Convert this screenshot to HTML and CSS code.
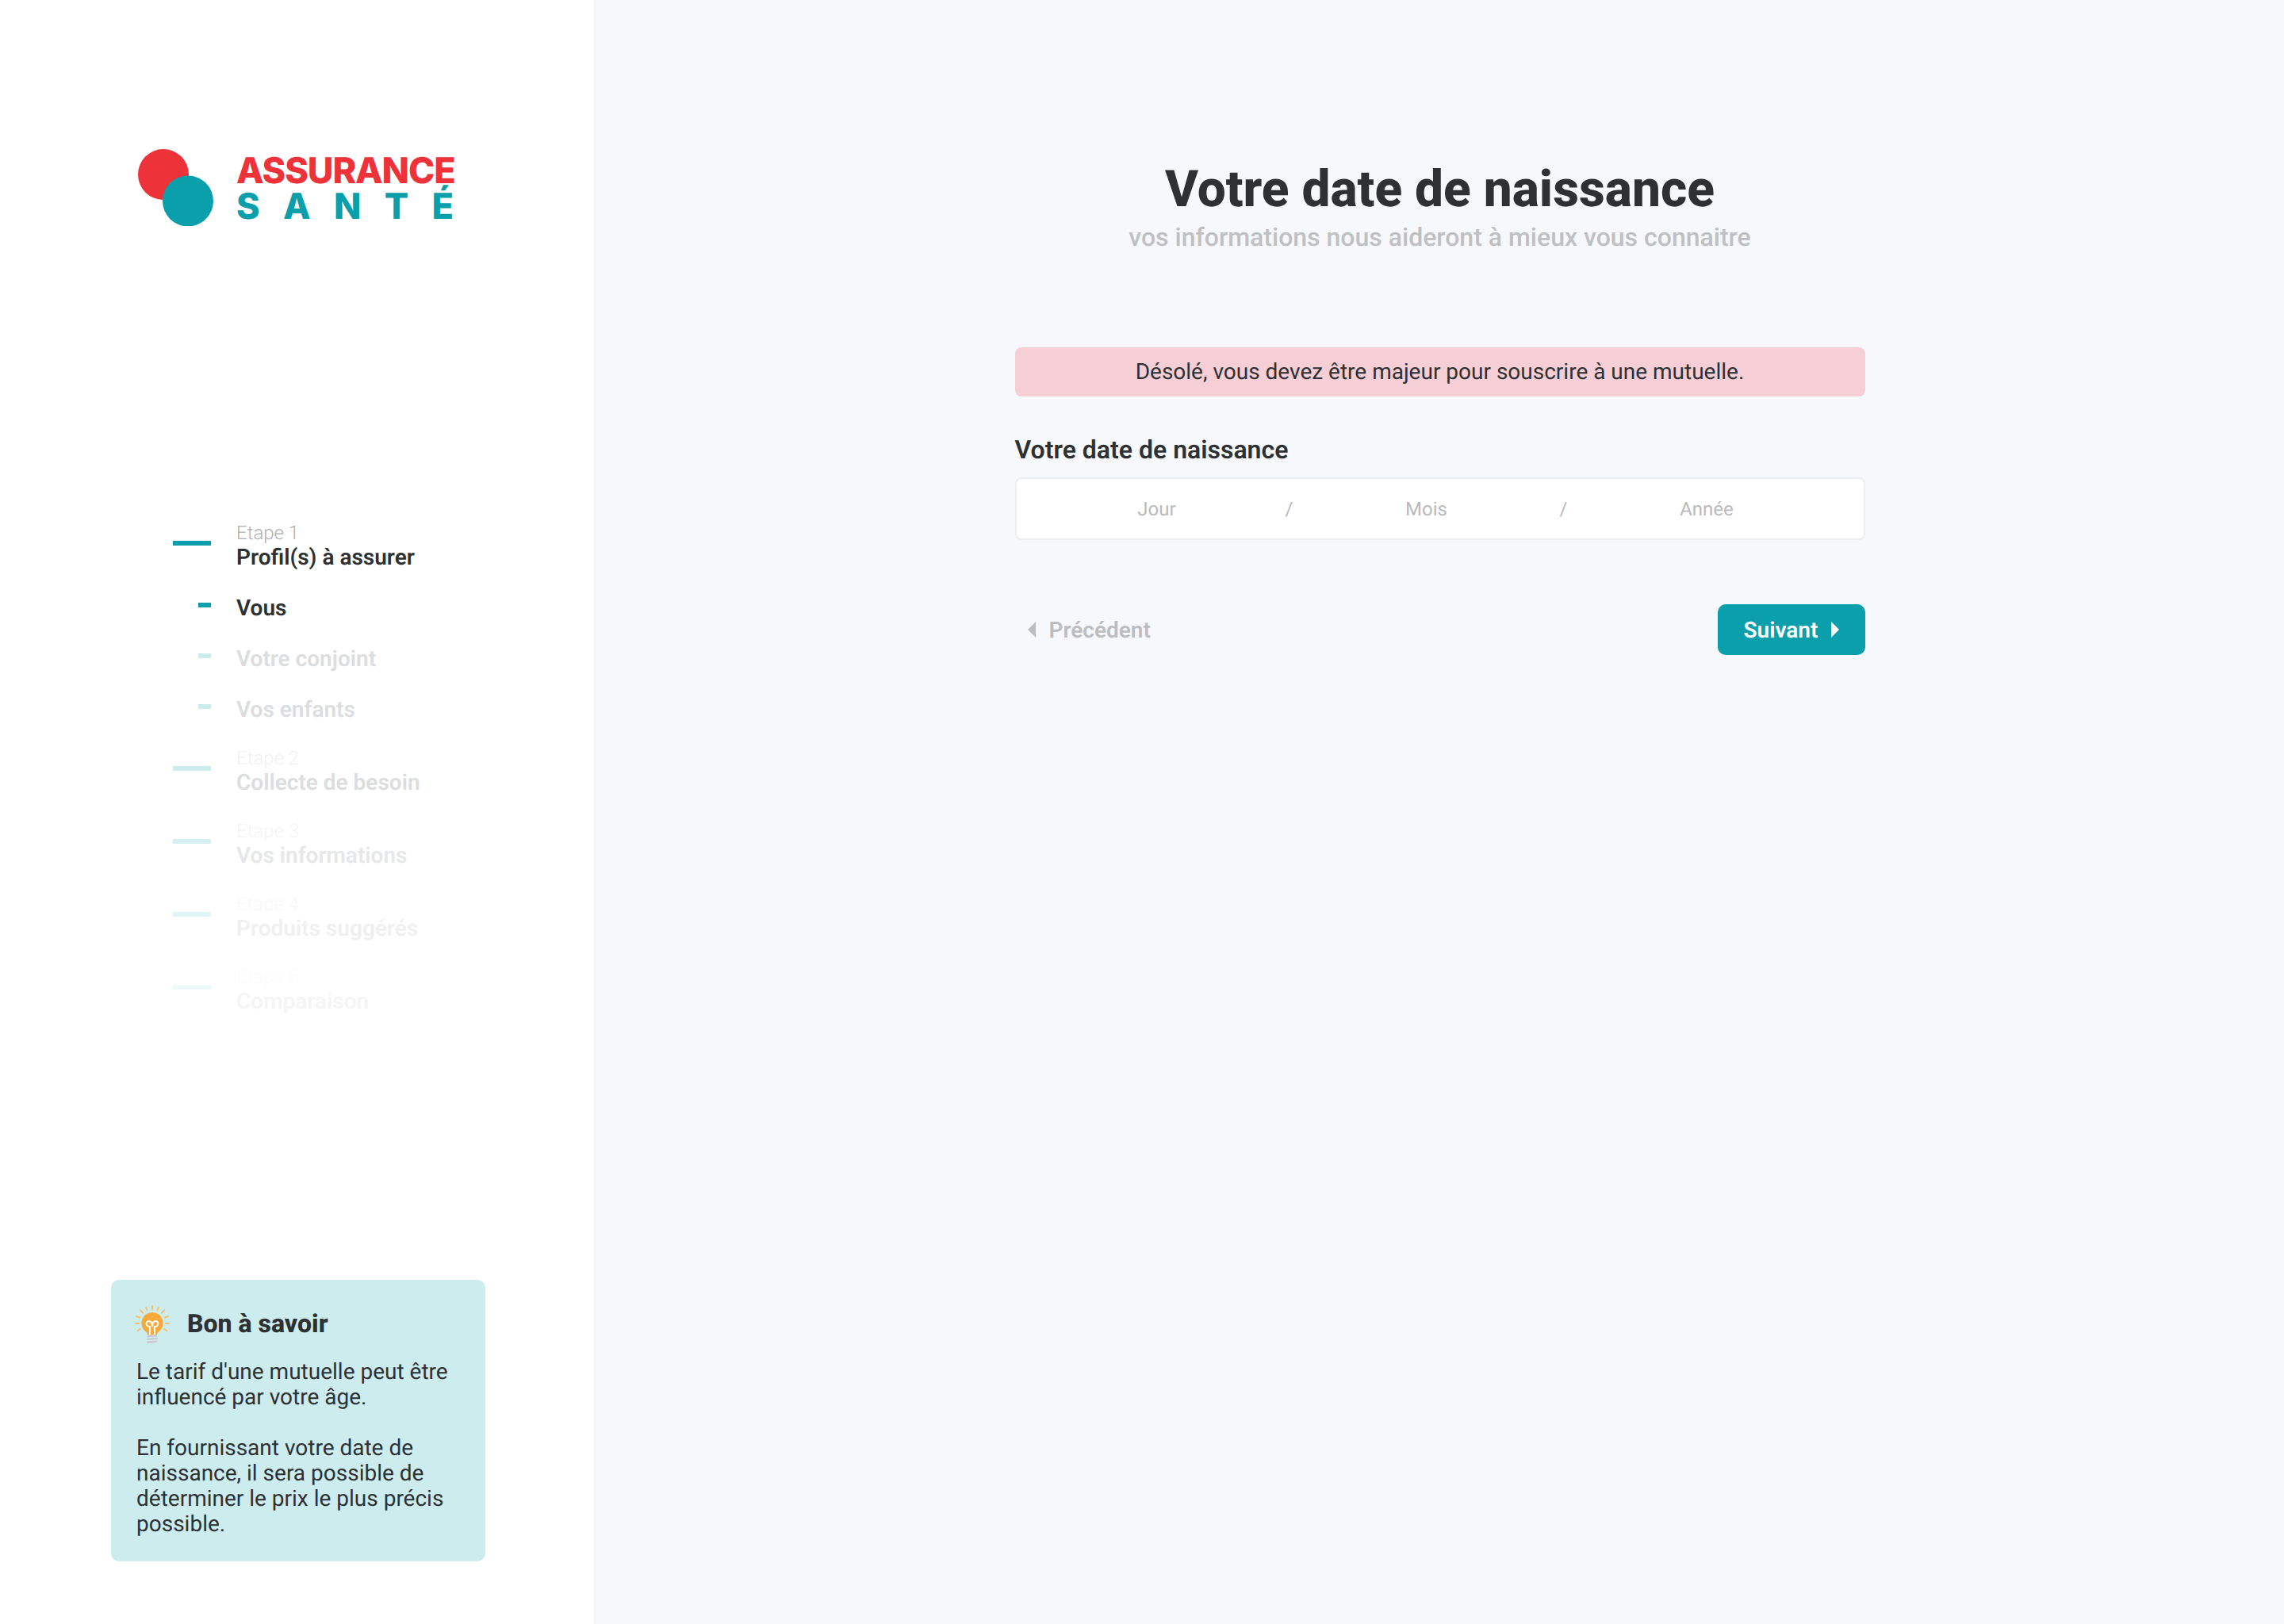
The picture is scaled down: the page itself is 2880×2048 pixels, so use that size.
FILE: index.html
```html
<!DOCTYPE html>
<html lang="fr">
<head>
<meta charset="utf-8">
<title>Assurance Santé</title>
<link rel="stylesheet" href="styles.css">
</head>
<body>
<div class="page">
  <aside class="sidebar">
    <div class="logo">
      <svg class="logo-mark" width="98" height="98" viewBox="0 0 98 98"><circle cx="33" cy="33" r="32" fill="#ee3239"/><circle cx="64" cy="66.500" r="32" fill="#0a9fab"/></svg>
      <div class="logo-text">
        <div class="logo-top">ASSURANCE</div>
        <div class="logo-bottom"><span>S</span><span>A</span><span>N</span><span>T</span><span>É</span></div>
      </div>
    </div>
    <nav class="steps">
      <div class="step active"><i class="bar"></i><div><div class="step-num">Etape 1</div><div class="step-name">Profil(s) à assurer</div></div></div>
      <div class="sub active"><i class="bar short"></i><div class="step-name">Vous</div></div>
      <div class="sub dim"><i class="bar short"></i><div class="step-name">Votre conjoint</div></div>
      <div class="sub dim"><i class="bar short"></i><div class="step-name">Vos enfants</div></div>
      <div class="step dim"><i class="bar"></i><div><div class="step-num">Etape 2</div><div class="step-name">Collecte de besoin</div></div></div>
      <div class="step dim f1"><i class="bar"></i><div><div class="step-num">Etape 3</div><div class="step-name">Vos informations</div></div></div>
      <div class="step dim f2"><i class="bar"></i><div><div class="step-num">Etape 4</div><div class="step-name">Produits suggérés</div></div></div>
      <div class="step dim f3"><i class="bar"></i><div><div class="step-num">Etape 5</div><div class="step-name">Comparaison</div></div></div>
    </nav>
    <section class="tip">
      <header class="tip-head">
        <svg width="44" height="50" viewBox="0 0 44 50" class="tip-icon">
          <g stroke="#f6c066" stroke-width="2" stroke-linecap="round">
            <path d="M22 1v4M14 2.500l1.500 4M30 2.500l-1.500 4M7 6.500l3 3M37 6.500l-3 3M2 14l4 1.500M42 14l-4 1.500M1 23h4M43 23h-4M3.500 32l3.500-2M40.500 32l-3.500-2"/>
          </g>
          <path d="M22 9a13.500 13.500 0 0 0-8 24.500c1.500 1 2 2.500 2 4h12c0-1.500.5-3 2-4A13.500 13.500 0 0 0 22 9z" fill="#f9a83a"/>
          <path d="M19 37V27c-5.500 0-5.500-7-1.500-7 3 0 4.500 3 4.500 7 0-4 1.500-7 4.500-7 4 0 4 7-1.500 7v10" fill="none" stroke="#fff" stroke-width="2"/>
          <path d="M16 37.500h12l.5 2-13 1zM15.500 42l13-1v2l-13 1zM15.500 45.500l13-1v2l-13 2z" fill="#c9c9cf"/>
        </svg>
        <h2>Bon à savoir</h2>
      </header>
      <p>Le tarif d'une mutuelle peut être influencé par votre âge.</p>
      <p>En fournissant votre date de naissance, il sera possible de déterminer le prix le plus précis possible.</p>
    </section>
  </aside>
  <main class="main">
    <h1>Votre date de naissance</h1>
    <div class="subtitle">vos informations nous aideront à mieux vous connaitre</div>
    <div class="form">
      <div class="alert">Désolé, vous devez être majeur pour souscrire à une mutuelle.</div>
      <label class="field-label">Votre date de naissance</label>
      <div class="date">
        <span>Jour</span><span>/</span><span>Mois</span><span>/</span><span>Année</span>
      </div>
      <div class="actions">
        <button class="btn prev"><i class="tri left"></i>Précédent</button>
        <button class="btn next">Suivant<i class="tri right"></i></button>
      </div>
    </div>
  </main>
</div>
</body>
</html>
```
FILE: styles.css
```css
* { box-sizing: border-box; }
html, body { margin: 0; padding: 0; }
body { font-family: Roboto, "Liberation Sans", sans-serif; color: #2e3133; background: #f7f8fc; text-rendering: geometricPrecision; }
.page { display: flex; width: 2880px; height: 2048px; }

.sidebar { width: 751px; flex: none; background: #fff; border-right: 2px solid #f3f4f8; display: flex; flex-direction: column; padding: 187px 0 79px; }
.logo { display: flex; align-items: flex-start; padding-left: 173px; }
.logo-mark { flex: none; display: block; }
.logo-text { width: 274px; margin-left: 27px; font-family: Inter, Roboto, sans-serif; font-weight: 800; }
.logo-top { font-size: 45px; line-height: 45px; margin-top: 5px; color: #ee3239; letter-spacing: -1.1px; white-space: nowrap; }
.logo-bottom { font-size: 45px; line-height: 45px; color: #0a9fab; display: flex; justify-content: space-between; }

.steps { margin-top: 371px; padding-left: 218px; }
.step, .sub { display: flex; align-items: center; color: #2e3133; }
.step { height: 64px; margin-bottom: 28px; }
.sub { height: 64px; }
.step:first-child { margin-bottom: 15px; }
.sub:nth-child(4) { margin-bottom: 13px; }
.bar { display: block; width: 48px; height: 6px; background: #0a9fab; margin: 0 32px 6px 0; flex: none; }
.bar.short { width: 16px; margin: 0 32px 8px 32px; }
.step-num { font-size: 24px; line-height: 30px; font-weight: 300; color: #aeb0b2; }
.step-name { font-size: 28px; line-height: 32px; font-weight: 600; }
.dim .bar { background: #cdecee; }
.dim .step-name { color: #dcddde; }
.dim .step-num { color: #f0f1f1; }
.f1 .step-name { color: #e6e7e8; }
.f1 .step-num { color: #f5f5f5; }
.f1 .bar { background: #d6f0f1; }
.f2 .step-name { color: #f0f0f1; }
.f2 .step-num { color: #f8f8f8; }
.f2 .bar { background: #e0f4f4; }
.f3 .step-name { color: #f5f5f6; }
.f3 .step-num { color: #fcfcfc; }
.f3 .bar { background: #eff9f9; }

.tip { margin: auto 0 0 140px; width: 472px; height: 355px; background: #cdecee; border-radius: 10px; padding: 30px 32px 32px; font-size: 28px; line-height: 32px; }
.tip-head { display: flex; align-items: center; height: 50px; margin-left: -2px; }
.tip-icon { flex: none; display: block; margin-top: 3px; }
.tip h2 { margin: 0 0 0 22px; font-size: 32px; line-height: 40px; font-weight: 800; }
.tip p { margin: 0 0 32px; }
.tip-head + p { margin-top: 20px; }

.main { flex: 1; display: flex; flex-direction: column; align-items: center; padding-top: 201px; }
h1 { margin: 0; font-size: 64px; line-height: 76px; font-weight: 800; color: #2e3133; }
.subtitle { font-size: 32px; line-height: 38px; font-weight: 500; color: #bfc0c2; margin-top: 3px; }
.form { width: 1072px; margin-top: 120px; }
.alert { height: 62px; background: #f6ced6; border-radius: 8px; display: flex; align-items: center; justify-content: center; font-size: 28px; padding-bottom: 1px; color: #2e3133; }
.field-label { display: block; margin-top: 47px; font-size: 32px; line-height: 40px; font-weight: 600; }
.date { margin-top: 15px; height: 79px; background: #fff; border: 2px solid #eceef1; border-radius: 8px; padding-left: 15px; display: grid; grid-template-columns: 324px 10px 336px 10px 351px; align-items: center; text-align: center; font-size: 24px; font-weight: 400; color: #b9babc; }
.actions { display: flex; justify-content: space-between; margin-top: 81px; }
.btn { height: 64px; border: 0; border-radius: 10px; font-family: inherit; font-size: 28px; font-weight: 600; display: flex; align-items: center; padding: 0; text-rendering: geometricPrecision; }
.prev { background: none; color: #bcbdc0; padding-left: 16px; }
.next { background: #0a9fab; color: #fff; width: 186px; padding-left: 33px; }
.tri { display: block; width: 0; height: 0; border-top: 10px solid transparent; border-bottom: 10px solid transparent; }
.tri.left { border-right: 10px solid #bcbdc0; margin-right: 17px; }
.tri.right { border-left: 10px solid #fff; margin-left: 17px; }
```
